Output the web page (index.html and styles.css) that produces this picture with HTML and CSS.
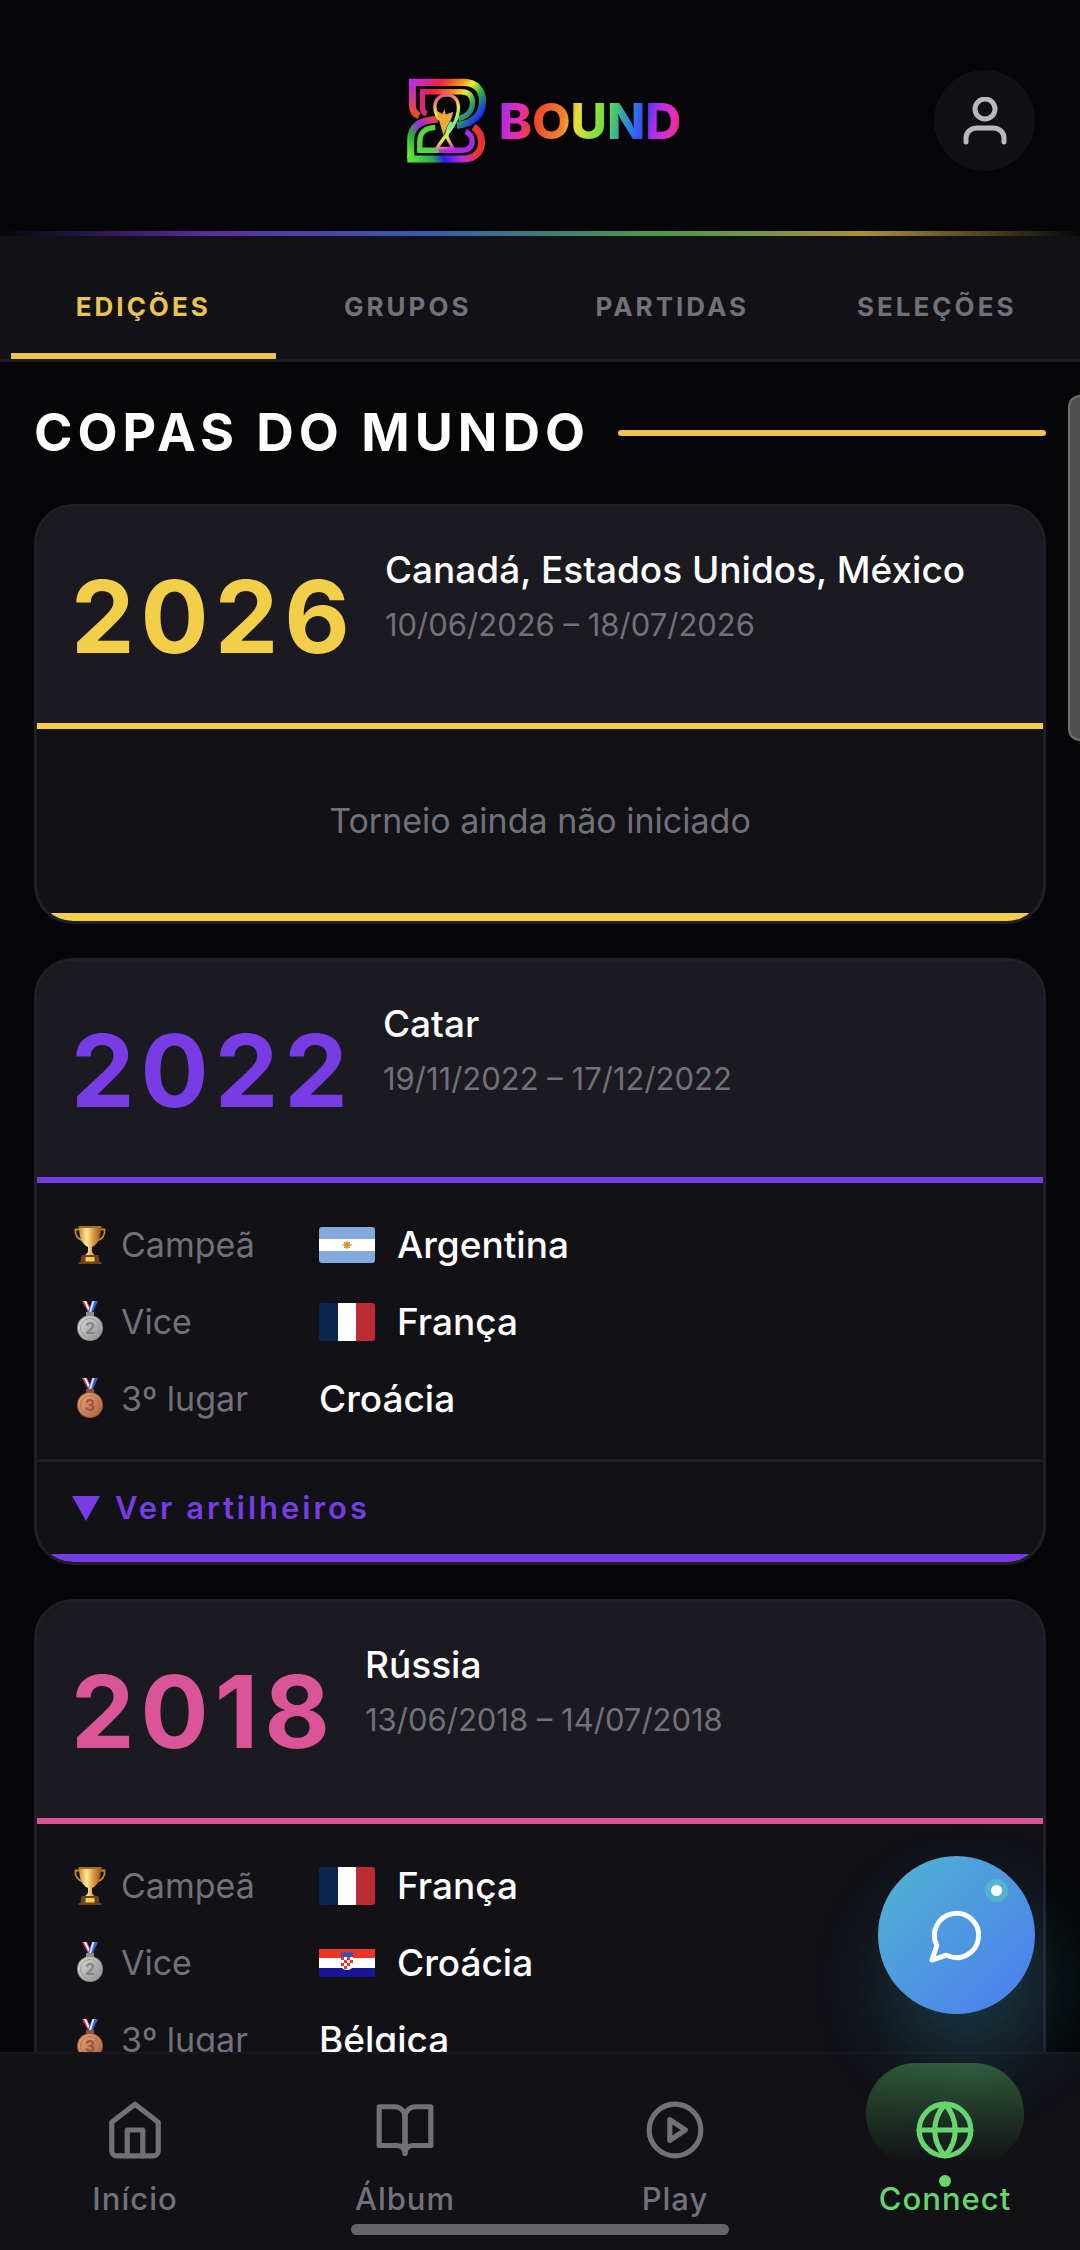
FILE: index.html
```html
<!DOCTYPE html>
<html lang="pt-BR">
<head>
  <title>Bound - Copas do Mundo</title>
  <meta charset="UTF-8">
  <meta name="viewport" content="width=device-width, initial-scale=1">
  <link rel="stylesheet" href="styles.css">
</head>
<body>
  <!-- Shared drawings -->
  <svg width="0" height="0" class="sprite" aria-hidden="true">
    <defs>
      <linearGradient id="gold" x1="0" x2="1">
        <stop offset="0" stop-color="#c98a2c"/>
        <stop offset="0.35" stop-color="#ffe9a0"/>
        <stop offset="0.65" stop-color="#dd9c3a"/>
        <stop offset="1" stop-color="#96591c"/>
      </linearGradient>
      <linearGradient id="silver" x1="0" x2="1" y2="1">
        <stop offset="0" stop-color="#dcdcdc"/>
        <stop offset="1" stop-color="#8f8f8f"/>
      </linearGradient>
      <linearGradient id="bronze" x1="0" x2="1" y2="1">
        <stop offset="0" stop-color="#e9a881"/>
        <stop offset="1" stop-color="#a8623f"/>
      </linearGradient>
    </defs>
    <symbol id="trophy" viewBox="0 0 36 42">
      <path d="M8 5.500H3.500C2.500 11 6 15.500 11 16.500M28 5.500h4.500C33.500 11 30 15.500 25 16.500" fill="none" stroke="#c8893a" stroke-width="1.800"/>
      <path d="M7 2h22c0 10-2 18-9 21v4c0 3 4 4 5 6H11c1-2 5-3 5-6v-4C9 20 7 12 7 2z" fill="url(#gold)"/>
      <path d="M6.500 2h23v2h-23z" fill="#a8681f"/>
      <path d="M9.500 31h17l1 7h2v2H6.500v-2h2z" fill="#6f4024"/>
      <path d="M13.500 33h9v4.500h-9z" fill="#f3d13f"/>
    </symbol>
    <symbol id="silver-medal" viewBox="0 0 36 42">
      <path d="M10 0h5l6 13h-4z" fill="#d9445a"/>
      <path d="M12 0h2l6 13h-2z" fill="#fff"/>
      <path d="M26 0h-6l-5 13h5z" fill="#2f5fd0"/>
      <path d="M22.500 0h-2l-4 13h2z" fill="#dfe9ff"/>
      <path d="M14 11h8v4h-8z" fill="#8d8d8d"/>
      <circle cx="18" cy="27" r="13" fill="#8b8b8b"/>
      <circle cx="18" cy="27" r="12" fill="url(#silver)"/>
      <circle cx="18" cy="27" r="9.500" fill="none" stroke="#9b9b9b"/>
      <text x="18" y="33" class="medal-number" fill="#858585">2</text>
    </symbol>
    <symbol id="bronze-medal" viewBox="0 0 36 42">
      <path d="M10 0h5l6 13h-4z" fill="#d9445a"/>
      <path d="M12 0h2l6 13h-2z" fill="#fff"/>
      <path d="M26 0h-6l-5 13h5z" fill="#2f5fd0"/>
      <path d="M22.500 0h-2l-4 13h2z" fill="#dfe9ff"/>
      <path d="M14 11h8v4h-8z" fill="#8f4f30"/>
      <circle cx="18" cy="27" r="13" fill="#9c5836"/>
      <circle cx="18" cy="27" r="12" fill="url(#bronze)"/>
      <circle cx="18" cy="27" r="9.500" fill="none" stroke="#b26f4c"/>
      <text x="18" y="33" class="medal-number" fill="#9a5637">3</text>
    </symbol>
    <symbol id="flag-france" viewBox="0 0 56 38">
      <path d="M0 0h19v38H0z" fill="#0c2550"/>
      <path d="M19 0h18v38H19z" fill="#fff"/>
      <path d="M37 0h19v38H37z" fill="#bb2d33"/>
    </symbol>
    <symbol id="flag-argentina" viewBox="0 0 56 36">
      <path d="M0 0h56v36H0z" fill="#82aadc"/>
      <path d="M0 12h56v12H0z" fill="#fff"/>
      <path d="M23 18h10M28 14v8M25 15l6 6M31 15l-6 6" stroke="#c98d3c"/>
      <circle cx="28" cy="18" r="3" fill="#d9952f"/>
    </symbol>
    <symbol id="flag-croatia" viewBox="0 0 56 28">
      <path d="M0 0h56v10H0z" fill="#ee3524"/>
      <path d="M0 9h56v10H0z" fill="#fff"/>
      <path d="M0 19h56v9H0z" fill="#171796"/>
      <path d="M22 7h12v9c0 3-3 5-6 5s-6-2-6-5z" fill="#fff"/>
      <path d="M22 8h3v3h-3zM28 8h3v3h-3zM25 11h3v3h-3zM31 11h3v3h-3zM22 14h3v3h-3zM28 14h3v3h-3zM25 17h3v3h-3z" fill="#ee3524"/>
      <path d="M22 4l3-1 3 1 3-1 3 1v4H22z" fill="#2b57b8"/>
    </symbol>
  </svg>

  <header class="header">
    <a class="logo" href="#" aria-label="Bound">
      <svg class="logo-mark" viewBox="75 75 250 265" aria-hidden="true">
        <defs>
          <linearGradient id="top-band" gradientUnits="userSpaceOnUse" x1="100" y1="90" x2="270" y2="230">
            <stop offset="0" stop-color="#c22bea"/>
            <stop offset="0.3" stop-color="#ee2440"/>
            <stop offset="0.5" stop-color="#f58a1c"/>
            <stop offset="0.64" stop-color="#e8ee3a"/>
            <stop offset="0.78" stop-color="#35b83b"/>
            <stop offset="1" stop-color="#1a2cf2"/>
          </linearGradient>
          <linearGradient id="left-band" x1="0" y1="0" x2="0" y2="1">
            <stop offset="0" stop-color="#b42bea"/>
            <stop offset="1" stop-color="#ee4a24"/>
          </linearGradient>
          <linearGradient id="low-left" x1="1" y1="0" x2="0" y2="1">
            <stop offset="0" stop-color="#f0452a"/>
            <stop offset="0.4" stop-color="#9a2be0"/>
            <stop offset="0.7" stop-color="#2fae3c"/>
            <stop offset="1" stop-color="#6ff03a"/>
          </linearGradient>
          <linearGradient id="low-band" gradientUnits="userSpaceOnUse" x1="90" y1="320" x2="305" y2="230">
            <stop offset="0" stop-color="#55e63a"/>
            <stop offset="0.25" stop-color="#2ab04a"/>
            <stop offset="0.4" stop-color="#2420f0"/>
            <stop offset="0.62" stop-color="#c22be0"/>
            <stop offset="0.8" stop-color="#f0322a"/>
            <stop offset="1" stop-color="#e8303a"/>
          </linearGradient>
          <linearGradient id="cup" gradientUnits="userSpaceOnUse" x1="165" y1="130" x2="220" y2="290">
            <stop offset="0" stop-color="#ee2fa8"/>
            <stop offset="0.3" stop-color="#f5e03a"/>
            <stop offset="0.6" stop-color="#6ff0a0"/>
            <stop offset="0.8" stop-color="#f2ee3a"/>
            <stop offset="1" stop-color="#c22bea"/>
          </linearGradient>
        </defs>
        <g fill="none" stroke-width="21">
          <path d="M97 94v68c0 16 8 26 20 32" stroke="url(#left-band)"/>
          <path d="M87 94h163c38 0 56 26 56 56 0 40-28 68-76 72" stroke="url(#top-band)"/>
          <path d="M172 204c-52 2-80 22-80 62v56" stroke="url(#low-left)"/>
          <path d="M82 322h166c36 0 55-22 55-50 0-20-8-35-24-45" stroke="url(#low-band)"/>
        </g>
        <g fill="none" stroke-width="16">
          <path d="M127 122v48c0 8 4 14 12 18" stroke="#d62b6e"/>
          <path d="M120 122h122c24 0 34 14 34 32 0 24-16 42-42 48" stroke="url(#top-band)"/>
          <path d="M165 228c-34 2-46 18-46 44v24h60" stroke="#55d83a"/>
          <path d="M176 296h68c20 0 31-10 31-26 0-14-6-24-20-30" stroke="#a82be0"/>
        </g>
        <!-- Trophy in the middle of the B -->
        <path d="M178 205c-24-32-18-72 22-74 38 2 40 40 26 76-12 30-38 50-60 90" fill="none" stroke="url(#cup)" stroke-width="10"/>
        <path d="M168 178l18 10 6-14 4 16 22-8c-4 30-22 40-28 72z" fill="#f2a83a"/>
        <path d="M214 212c-16 24-20 40-6 60l10 18h-48" fill="none" stroke="url(#cup)" stroke-width="9"/>
      </svg>
      <span class="logo-text">BOUND</span>
    </a>
    <button type="button" class="profile-button" aria-label="Perfil">
      <svg viewBox="0 0 48 48" aria-hidden="true">
        <circle cx="24" cy="12" r="10"/>
        <path d="M5 45v-4c0-6 5-10 11-10h16c6 0 11 4 11 10v4"/>
      </svg>
    </button>
  </header>

  <nav class="tabs">
    <button type="button" class="tab active">EDIÇÕES</button>
    <button type="button" class="tab">GRUPOS</button>
    <button type="button" class="tab">PARTIDAS</button>
    <button type="button" class="tab">SELEÇÕES</button>
  </nav>

  <main class="content">
    <h1 class="page-title">COPAS DO MUNDO</h1>

    <section class="card gold">
      <div class="card-header">
        <h2 class="year">2026</h2>
        <div class="info">
          <p class="host">Canadá, Estados Unidos, México</p>
          <p class="dates">10/06/2026 – 18/07/2026</p>
        </div>
      </div>
      <p class="not-started">Torneio ainda não iniciado</p>
    </section>

    <section class="card purple">
      <div class="card-header">
        <h2 class="year">2022</h2>
        <div class="info">
          <p class="host">Catar</p>
          <p class="dates">19/11/2022 – 17/12/2022</p>
        </div>
      </div>
      <dl class="podium">
        <div class="place">
          <dt><svg class="medal"><use href="#trophy"/></svg>Campeã</dt>
          <dd><svg class="flag argentina"><use href="#flag-argentina"/></svg>Argentina</dd>
        </div>
        <div class="place">
          <dt><svg class="medal"><use href="#silver-medal"/></svg>Vice</dt>
          <dd><svg class="flag france"><use href="#flag-france"/></svg>França</dd>
        </div>
        <div class="place">
          <dt><svg class="medal"><use href="#bronze-medal"/></svg>3º lugar</dt>
          <dd>Croácia</dd>
        </div>
      </dl>
      <button type="button" class="scorers"><span class="arrow"></span>Ver artilheiros</button>
    </section>

    <section class="card pink">
      <div class="card-header">
        <h2 class="year">2018</h2>
        <div class="info">
          <p class="host">Rússia</p>
          <p class="dates">13/06/2018 – 14/07/2018</p>
        </div>
      </div>
      <dl class="podium">
        <div class="place">
          <dt><svg class="medal"><use href="#trophy"/></svg>Campeã</dt>
          <dd><svg class="flag france"><use href="#flag-france"/></svg>França</dd>
        </div>
        <div class="place">
          <dt><svg class="medal"><use href="#silver-medal"/></svg>Vice</dt>
          <dd><svg class="flag croatia"><use href="#flag-croatia"/></svg>Croácia</dd>
        </div>
        <div class="place">
          <dt><svg class="medal"><use href="#bronze-medal"/></svg>3º lugar</dt>
          <dd>Bélgica</dd>
        </div>
      </dl>
    </section>
  </main>

  <nav class="bottom-nav">
    <a class="nav-item" href="#">
      <svg class="nav-icon" viewBox="0 0 24 24" aria-hidden="true">
        <path d="M3 9l9-7 9 7v11a2 2 0 0 1-2 2H5a2 2 0 0 1-2-2z"/>
        <path d="M9 22V12h6v10"/>
      </svg>
      Início
    </a>
    <a class="nav-item" href="#">
      <svg class="nav-icon" viewBox="0 0 24 24" aria-hidden="true">
        <path d="M2 3h6a4 4 0 0 1 4 4v14a3 3 0 0 0-3-3H2z"/>
        <path d="M22 3h-6a4 4 0 0 0-4 4v14a3 3 0 0 1 3-3h7z"/>
      </svg>
      Álbum
    </a>
    <a class="nav-item" href="#">
      <svg class="nav-icon" viewBox="0 0 24 24" aria-hidden="true">
        <circle cx="12" cy="12" r="10"/>
        <path d="M10 8l6 4-6 4z"/>
      </svg>
      Play
    </a>
    <a class="nav-item active" href="#">
      <svg class="nav-icon" viewBox="0 0 24 24" aria-hidden="true">
        <circle cx="12" cy="12" r="10"/>
        <path d="M2 12h20"/>
        <path d="M12 2a15.300 15.300 0 0 1 4 10 15.300 15.300 0 0 1-4 10 15.300 15.300 0 0 1-4-10 15.300 15.300 0 0 1 4-10z"/>
      </svg>
      Connect
    </a>
  </nav>

  <button type="button" class="chat-button" aria-label="Chat">
    <svg viewBox="0 0 24 24" aria-hidden="true">
      <path d="M7.900 20A9 9 0 1 0 4 16.100L2 22Z"/>
    </svg>
    <span class="chat-dot"></span>
  </button>

  <div class="scroll-thumb"></div>
  <div class="home-indicator"></div>
</body>
</html>
```

FILE: styles.css
```css
* {
  box-sizing: border-box;
}

body {
  margin: 0;
  height: 100vh;
  display: flex;
  flex-direction: column;
  overflow: hidden;
  background-color: #060608;
  color: #ffffff;
  font-family: Inter, "Liberation Sans", sans-serif;
}

button {
  border: none;
  background: none;
  font-family: inherit;
  cursor: pointer;
}

h1, h2, p, dl, dd {
  margin: 0;
}

.sprite {
  position: absolute;
}

.medal-number {
  font-size: 16px;
  font-weight: bold;
  text-anchor: middle;
}

/* Header */
.header {
  display: grid;
  grid-template-columns: 1fr auto 1fr;
  align-items: center;
  flex-shrink: 0;
  height: 236px;
  padding: 10px 45px 0;
  border-bottom: 5px solid;
  border-image: linear-gradient(90deg, transparent, #5a2ea6 20%, #3a5cab 40%, #48984c 60%, #a98f33 80%, transparent) 1;
}

.logo {
  grid-column: 2;
  display: flex;
  align-items: center;
  gap: 10px;
  padding-left: 6px;
  text-decoration: none;
}

.logo-mark {
  width: 84px;
  height: 89px;
}

.logo-text {
  font-size: 50px;
  font-weight: 800;
  line-height: 60px;
  color: transparent;
  background: linear-gradient(100deg, #9a2bf0 0%, #e82bb8 13%, #f0402a 20%, #f2822e 36%, #e8e03a 43%, #6fe03a 57%, #3cb88a 64%, #2a7af2 72%, #4a3cf0 79%, #b02bf0 84%, #e82bc8 92%, #e0304a 100%);
  -webkit-background-clip: text;
  background-clip: text;
}

.profile-button {
  justify-self: end;
  display: flex;
  align-items: center;
  justify-content: center;
  width: 101px;
  height: 101px;
  padding: 0;
  border-radius: 50%;
  background-color: #111115;
}

.profile-button svg {
  width: 48px;
  height: 48px;
  fill: none;
  stroke: #b8b8c0;
  stroke-width: 5;
  stroke-linecap: round;
}

/* Tabs */
.tabs {
  display: flex;
  flex-shrink: 0;
  padding: 0 11px;
  background-color: #111116;
  border-bottom: 3px solid #1e1e25;
}

.tab {
  flex: 1;
  padding: 53px 0 28px;
  border-bottom: 6px solid transparent;
  color: #71717a;
  font-size: 26px;
  font-weight: 700;
  line-height: 36px;
  letter-spacing: 3px;
}

.tab.active {
  color: #ecc44e;
  border-bottom-color: #ecc44e;
}

/* Content */
.content {
  flex: 1;
  min-height: 0;
  overflow-y: auto;
  scrollbar-width: none;
  padding: 0 34px;
}

.page-title {
  display: flex;
  align-items: center;
  gap: 28px;
  padding: 41px 0;
  font-size: 52px;
  font-weight: 700;
  line-height: 60px;
  letter-spacing: 5px;
}

.page-title::after {
  content: "";
  flex: 1;
  height: 6px;
  border-radius: 3px;
  background-color: #ecc44e;
}

.card {
  margin-bottom: 34px;
  overflow: hidden;
  border: 3px solid #1f1f27;
  border-radius: 39px;
  background-color: #111116;
}

.card::after {
  content: "";
  display: block;
  height: 8px;
  background-color: var(--accent);
}

.gold {
  --accent: #f2ce49;
}

.purple {
  --accent: #773ce3;
}

.pink {
  --accent: #da5597;
}

.card-header {
  display: flex;
  align-items: flex-start;
  gap: 29px;
  padding: 35px 34px 33px;
  border-bottom: 6px solid var(--accent);
  background-color: #1a1a20;
}

.year {
  color: var(--accent);
  font-size: 101px;
  font-weight: 700;
  line-height: 148px;
  letter-spacing: 6px;
}

.host {
  font-size: 37px;
  font-weight: 500;
  line-height: 55px;
}

.dates {
  color: #71717a;
  font-size: 31px;
  line-height: 55px;
}

.not-started {
  padding: 67px 34px;
  color: #71717a;
  font-size: 34px;
  line-height: 50px;
  text-align: center;
}

.podium {
  display: flex;
  flex-direction: column;
  gap: 22px;
  padding: 34px 34px 33px;
}

.place {
  display: flex;
  align-items: center;
  height: 55px;
}

.place dt {
  display: flex;
  align-items: center;
  gap: 12px;
  width: 248px;
  color: #71717a;
  font-size: 34px;
}

.place dd {
  display: flex;
  align-items: center;
  gap: 22px;
  font-size: 37px;
  font-weight: 500;
}

.medal {
  width: 38px;
  height: 42px;
}

.flag {
  width: 56px;
  border-radius: 3px;
}

.flag.argentina {
  height: 36px;
}

.flag.france {
  height: 38px;
}

.flag.croatia {
  height: 28px;
  border-radius: 0;
}

.scorers {
  display: flex;
  align-items: center;
  gap: 15px;
  width: 100%;
  padding: 21px 35px;
  border-top: 3px solid #1f1f27;
  color: var(--accent);
  font-size: 31px;
  font-weight: 600;
  line-height: 50px;
  letter-spacing: 3px;
}

.arrow {
  border: 14px solid transparent;
  border-top: 25px solid currentColor;
  border-bottom: none;
}

/* Bottom navigation */
.bottom-nav {
  display: flex;
  flex-shrink: 0;
  padding-bottom: 26px;
  border-top: 2px solid #17171d;
  background-color: #111116;
}

.nav-item {
  position: relative;
  flex: 1;
  display: flex;
  flex-direction: column;
  align-items: center;
  gap: 18px;
  padding: 45px 0 5px;
  color: #71717a;
  font-size: 31px;
  font-weight: 500;
  line-height: 40px;
  letter-spacing: 1px;
  text-decoration: none;
}

.nav-icon {
  position: relative;
  width: 62px;
  height: 62px;
  fill: none;
  stroke: currentColor;
  stroke-width: 2;
  stroke-linecap: round;
  stroke-linejoin: round;
}

.nav-item.active {
  color: #68d66f;
}

/* Green glow behind the active icon */
.nav-item.active::before {
  content: "";
  position: absolute;
  top: 9px;
  left: 50%;
  width: 158px;
  height: 101px;
  margin-left: -79px;
  border-radius: 50px;
  background: linear-gradient(rgba(104, 214, 111, 0.35), transparent);
}

.nav-item.active::after {
  content: "";
  position: absolute;
  top: 121px;
  left: 50%;
  width: 12px;
  height: 12px;
  margin-left: -6px;
  border-radius: 50%;
  background-color: #68d66f;
}

/* Floating elements */
.chat-button {
  position: fixed;
  right: 45px;
  bottom: 236px;
  display: flex;
  align-items: center;
  justify-content: center;
  width: 157px;
  height: 158px;
  padding: 0;
  border-radius: 50%;
  background: linear-gradient(135deg, #51b5d0, #4b7bf0);
  box-shadow: 11px 45px 80px rgba(50, 170, 200, 0.26);
}

.chat-button svg {
  width: 59px;
  height: 59px;
  fill: none;
  stroke: #ffffff;
  stroke-width: 2;
  stroke-linecap: round;
  stroke-linejoin: round;
}

.chat-dot {
  position: absolute;
  top: 23px;
  right: 27px;
  width: 23px;
  height: 23px;
  border: 6px solid #53b4cf;
  border-radius: 50%;
  background-color: #ffffff;
}

.scroll-thumb {
  position: fixed;
  top: 395px;
  right: 0;
  width: 12px;
  height: 346px;
  border: 2px solid #707070;
  border-right: none;
  border-radius: 12px 0 0 12px;
  background-color: #4f4f4f;
}

.home-indicator {
  position: fixed;
  bottom: 15px;
  left: 50%;
  width: 378px;
  height: 11px;
  margin-left: -189px;
  border-radius: 6px;
  background-color: #666668;
}
```
